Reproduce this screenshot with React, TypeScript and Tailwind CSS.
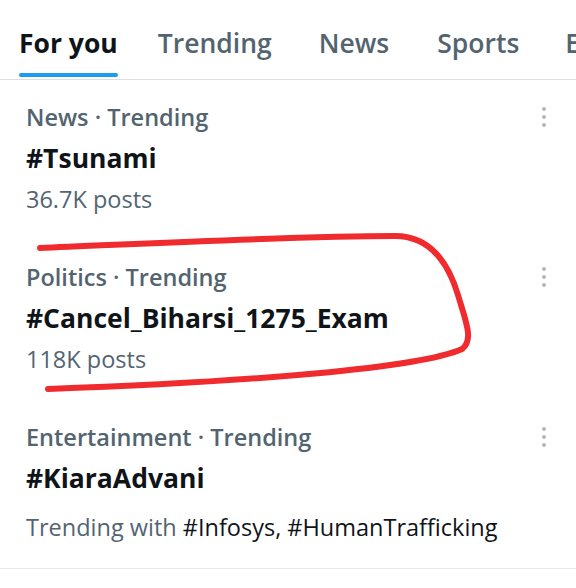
import type React from "react"

type Trend = {
  category: string
  title: string
  posts?: string
  trendingWith?: string[]
}

const trends: Trend[] = [
  { category: "News · Trending", title: "#Tsunami", posts: "36.7K posts" },
  { category: "Politics · Trending", title: "#Cancel_Biharsi_1275_Exam", posts: "118K posts" },
  {
    category: "Entertainment · Trending",
    title: "#KiaraAdvani",
    trendingWith: ["#Infosys", "#HumanTrafficking"],
  },
]

const tabs = [
  { label: "For you", space: "" },
  { label: "Trending", space: "ml-[40px]" },
  { label: "News", space: "ml-[47px]" },
  { label: "Sports", space: "ml-[48px]" },
  { label: "Entertainment", space: "ml-[46px]" },
]

const MoreDots: React.FC = () => (
  <div className="flex flex-col items-center gap-[4px] pt-[10px]">
    <span className="block w-[4px] h-[4px] rounded-full bg-[#b4b8bb]" />
    <span className="block w-[4px] h-[4px] rounded-full bg-[#b4b8bb]" />
    <span className="block w-[4px] h-[4px] rounded-full bg-[#b4b8bb]" />
  </div>
)

const TrendRow: React.FC<{ trend: Trend }> = ({ trend }) => (
  <div className="flex justify-between pl-[26px] pr-[30px] pt-[17px] pb-[20px]">
    <div className="flex flex-col">
      <div className="text-[23.5px] leading-[41px] font-semibold text-[#536471]">{trend.category}</div>
      <div className="text-[26.5px] leading-[41px] font-bold text-[#0f1419]">{trend.title}</div>
      {trend.posts && <div className="text-[23.5px] leading-[41px] text-[#536471]">{trend.posts}</div>}
      {trend.trendingWith && (
        <div className="mt-[8px] text-[23.5px] leading-[41px] text-[#536471]">
          Trending with <span className="text-[#0f1419]">{trend.trendingWith.join(", ")}</span>
        </div>
      )}
    </div>
    <MoreDots />
  </div>
)

export default function App() {
  return (
    <div
      className="relative w-[576px] h-[588px] overflow-hidden bg-white"
      style={{ fontFamily: "'Open Sans', 'Noto Sans', sans-serif" }}
    >
      <div className="flex h-[80px] border-b border-[#dcdfe2] pl-[19px] whitespace-nowrap">
        {tabs.map((tab, i) => (
          <div key={tab.label} className={`flex flex-col items-center pt-[22px] ${tab.space}`}>
            <span
              className={
                i === 0
                  ? "text-[26.5px] leading-[42px] font-bold text-[#0f1419]"
                  : "text-[26.5px] leading-[42px] font-semibold text-[#536471]"
              }
            >
              {tab.label}
            </span>
            <span
              className={
                i === 0
                  ? "mt-[9px] block h-[4px] w-full rounded-full bg-[#1d9bf0]"
                  : "mt-[9px] block h-[4px] w-full"
              }
            />
          </div>
        ))}
      </div>

      <div className="border-b border-[#e6e8ea]">
        {trends.map((t) => (
          <TrendRow key={t.title} trend={t} />
        ))}
      </div>

      <svg
        className="absolute left-0 top-0 pointer-events-none"
        width="576"
        height="588"
        viewBox="0 0 576 588"
        fill="none"
      >
        <path
          d="M40 248 C 120 245, 290 236, 395 236 C 430 236, 448 262, 458 295 C 466 322, 474 340, 462 349 C 420 368, 250 382, 48 389"
          stroke="#ef2b2e"
          strokeWidth="6"
          strokeLinecap="round"
          strokeLinejoin="round"
        />
      </svg>
    </div>
  )
}
